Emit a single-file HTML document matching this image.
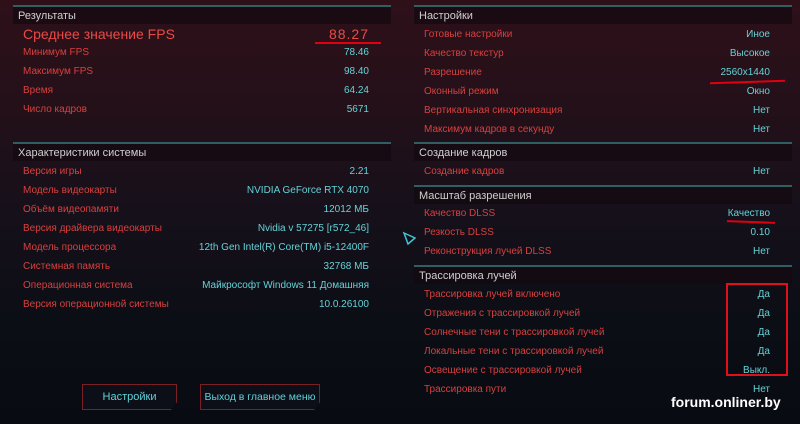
<!DOCTYPE html><html><head><meta charset="utf-8"><style>
*{margin:0;padding:0;box-sizing:border-box}
html,body{width:800px;height:424px;overflow:hidden}
body{position:relative;font-family:"Liberation Sans",sans-serif;font-size:10px;
background:linear-gradient(180deg,#2e1019 0%,#241019 25%,#16101a 50%,#0c0e16 75%,#080b12 100%);}
.p{position:absolute}
.hd{position:absolute;height:19px;background:rgba(20,10,16,.75);border-top:2px solid #2f5f63;color:#cfcfcf;font-size:11px;padding:3px 0 0 5px}
.l{position:absolute;color:#d8403e;font-size:10px;white-space:nowrap}
.v{position:absolute;color:#63d3d8;font-size:10px;text-align:right;white-space:nowrap}
.btn{position:absolute;height:26px;border:1px solid #7a2024;background:#0d0f18;color:#5fd3d8;font-size:11px;text-align:center;line-height:24px;white-space:nowrap;clip-path:polygon(0 0,100% 0,100% 70%,calc(100% - 6px) 100%,0 100%)}
.red{position:absolute;background:#e00010;height:2px}
</style></head><body>
<div class="hd" style="left:13px;top:5px;width:378px">Результаты</div>
<div class="l" style="left:23px;top:26px;font-size:14px;color:#ea4a46">Среднее значение FPS</div>
<div class="v" style="left:290px;width:79px;top:26px;font-size:14px;color:#ea4a46;letter-spacing:1px">88.27</div>
<div class="red" style="left:315px;top:42px;width:66px"></div>
<div class="hd" style="left:13px;top:142px;width:378px">Характеристики системы</div>
<div class="hd" style="left:414px;top:5px;width:378px">Настройки</div>
<div class="hd" style="left:414px;top:142px;width:378px">Создание кадров</div>
<div class="hd" style="left:414px;top:185px;width:378px">Масштаб разрешения</div>
<div class="hd" style="left:414px;top:265px;width:378px">Трассировка лучей</div>
<div class="red" style="left:710px;top:81px;width:75px;transform:rotate(-2deg)"></div>
<div class="red" style="left:727px;top:221px;width:48px;transform:rotate(2deg)"></div>
<div class="p" style="left:726px;top:283px;width:62px;height:93px;border:2px solid #e0101a"></div>
<svg class="p" style="left:402px;top:231px" width="14" height="14"><path d="M2 2 L13 7 L6 13 Z" fill="none" stroke="#3fc6d2" stroke-width="1.5"/></svg>
<div class="btn" style="left:82px;top:384px;width:95px">Настройки</div>
<div class="btn" style="left:200px;top:384px;width:120px;font-size:10.5px">Выход в главное меню</div>
<div class="p" style="left:671px;top:394px;color:#fff;font-weight:bold;font-size:14px">forum.onliner.by</div>
<script>
function rows(x,vr,t0,step,arr){let h='';arr.forEach((r,i)=>{let t=t0+i*step;h+=`<div class="l" style="left:${x}px;top:${t}px">${r[0]}</div><div class="v" style="left:${vr-250}px;width:250px;top:${t}px">${r[1]}</div>`});document.body.insertAdjacentHTML('beforeend',h)}
rows(23,369,47,19,[["Минимум FPS","78.46"],["Максимум FPS","98.40"],["Время","64.24"],["Число кадров","5671"]]);
rows(23,369,166,19,[["Версия игры","2.21"],["Модель видеокарты","NVIDIA GeForce RTX 4070"],["Объём видеопамяти","12012 МБ"],["Версия драйвера видеокарты","Nvidia v 57275 [r572_46]"],["Модель процессора","12th Gen Intel(R) Core(TM) i5-12400F"],["Системная память","32768 МБ"],["Операционная система","Майкрософт Windows 11 Домашняя"],["Версия операционной системы","10.0.26100"]]);
rows(424,770,29,19,[["Готовые настройки","Иное"],["Качество текстур","Высокое"],["Разрешение","2560x1440"],["Оконный режим","Окно"],["Вертикальная синхронизация","Нет"],["Максимум кадров в секунду","Нет"]]);
rows(424,770,166,19,[["Создание кадров","Нет"]]);
rows(424,770,208,19,[["Качество DLSS","Качество"],["Резкость DLSS","0.10"],["Реконструкция лучей DLSS","Нет"]]);
rows(424,770,289,19,[["Трассировка лучей включено","Да"],["Отражения с трассировкой лучей","Да"],["Солнечные тени с трассировкой лучей","Да"],["Локальные тени с трассировкой лучей","Да"],["Освещение с трассировкой лучей","Выкл."],["Трассировка пути","Нет"]]);
</script>
</body></html>
